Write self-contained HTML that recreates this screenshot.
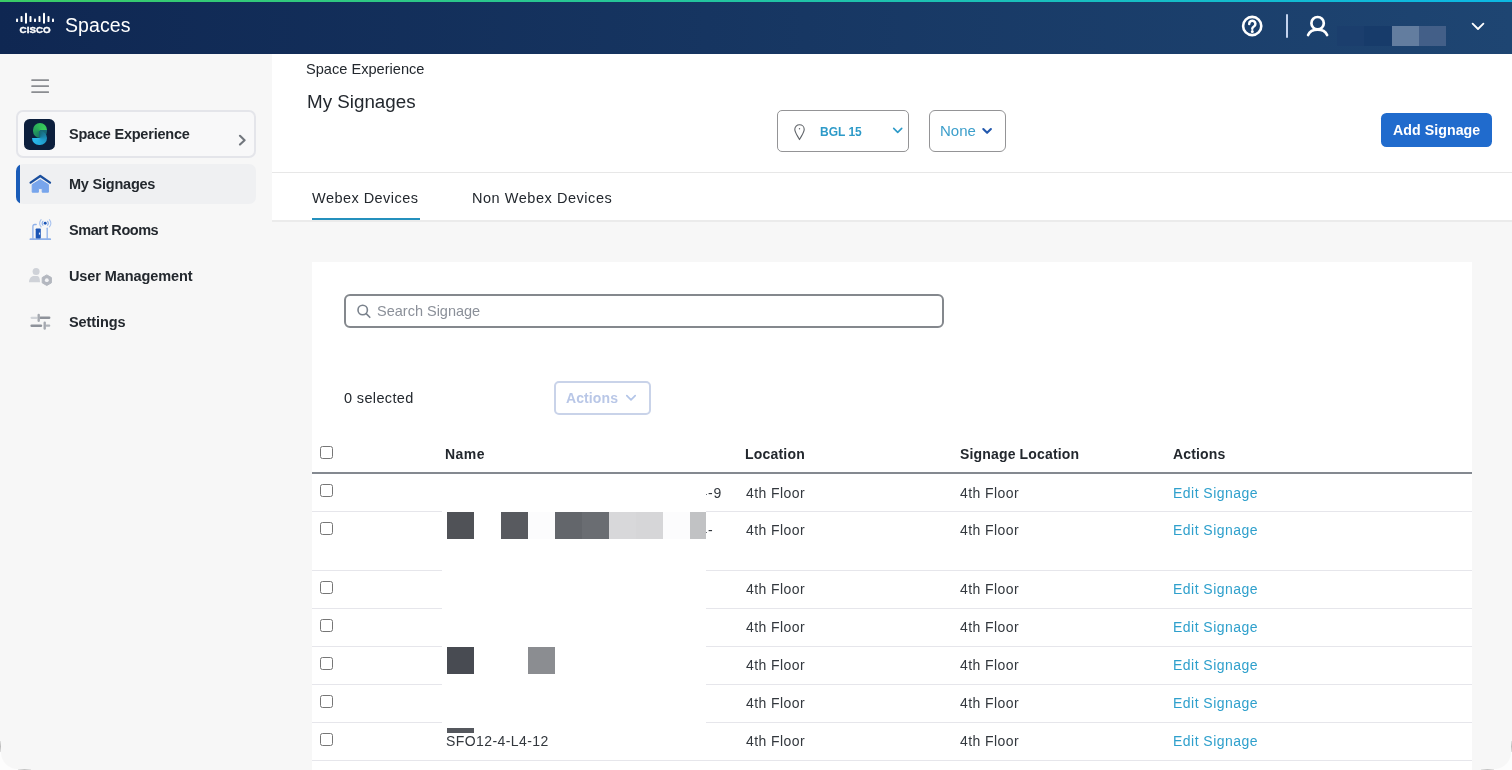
<!DOCTYPE html>
<html>
<head>
<meta charset="utf-8">
<title>Spaces</title>
<style>
*{box-sizing:border-box;margin:0;padding:0}
html,body{width:1512px;height:770px;overflow:hidden;background:#f7f7f7;font-family:"Liberation Sans",sans-serif;color:#23282e}
.abs{position:absolute}
#topbar{position:absolute;left:0;top:0;width:1512px;height:2px;background:linear-gradient(90deg,#3acc66 0%,#22c4a0 48%,#0db8e2 97%,#0db8e2 100%)}
#header{position:absolute;left:0;top:2px;width:1512px;height:52px;background:linear-gradient(90deg,#0f2752 0%,#1e4572 100%)}
#brand{will-change:transform;position:absolute;left:65px;top:13px;font-size:19.5px;color:#fff;line-height:24px;letter-spacing:0.1px}
#sidebar{position:absolute;left:0;top:54px;width:272px;height:716px;background:#f7f7f7}
#main{position:absolute;left:272px;top:54px;width:1240px;height:716px;background:#f7f7f7}
#pagehead{position:absolute;left:0;top:0;width:1240px;height:119px;background:#fff;border-bottom:1px solid #e7e7e7}
#tabs{position:absolute;left:0;top:119px;width:1240px;height:49px;background:#fff;border-bottom:2px solid #ebebeb}
#card{position:absolute;left:40px;top:208px;width:1160px;height:520px;background:#fff}
.nav{position:absolute;left:68.5px;font-size:14.5px;font-weight:bold;color:#23282e;line-height:20px;letter-spacing:-0.22px;white-space:nowrap;will-change:transform}
.txt{position:absolute;white-space:nowrap;will-change:transform}
</style>
</head>
<body>
<div id="header"></div>
<div id="topbar"></div>
<div id="brand">Spaces</div>
<!-- cisco logo -->
<svg class="abs" style="left:15px;top:11px;will-change:transform" width="41" height="24" viewBox="0 0 41 24">
  <g fill="#fff">
    <rect x="1.05" y="7.6" width="2" height="3.5" rx="0.9"/>
    <rect x="5.55" y="4.9" width="2" height="6.2" rx="0.9"/>
    <rect x="10" y="1.8" width="2" height="10.9" rx="0.9"/>
    <rect x="14.5" y="4.9" width="2" height="6.2" rx="0.9"/>
    <rect x="19" y="7.6" width="2" height="3.5" rx="0.9"/>
    <rect x="23.5" y="4.9" width="2" height="6.2" rx="0.9"/>
    <rect x="28" y="1.8" width="2" height="10.9" rx="0.9"/>
    <rect x="32.5" y="4.9" width="2" height="6.2" rx="0.9"/>
    <rect x="37" y="7.6" width="2" height="3.5" rx="0.9"/>
  </g>
  <text x="4.6" y="22.3" font-family="Liberation Sans" font-weight="bold" font-size="9.7" fill="#fff" stroke="#fff" stroke-width="0.4" textLength="31" lengthAdjust="spacingAndGlyphs">CISCO</text>
</svg>
<!-- help -->
<svg class="abs" style="left:1240px;top:14px" width="24" height="24" viewBox="0 0 24 24" fill="none" stroke="#fff" stroke-width="2.6" stroke-linecap="round" stroke-linejoin="round">
  <circle cx="12.2" cy="12" r="9.1"/>
  <path d="M9.2 9.900a3.100 3.100 0 1 1 4.700 2.600c-1.100.7-1.600 1.200-1.600 2.200" stroke-width="2.500"/>
  <circle cx="12.300" cy="17.600" r="0.900" fill="#fff" stroke-width="1.200"/>
</svg>
<div class="abs" style="left:1286px;top:14px;width:2px;height:24px;background:#c3d3ee;border-radius:1px"></div>
<!-- user -->
<svg class="abs" style="left:1305px;top:14px" width="25" height="24" viewBox="0 0 25 24" fill="none" stroke="#fff" stroke-width="2.700" stroke-linecap="round" stroke-linejoin="round">
  <circle cx="12.600" cy="9.200" r="6.200"/>
  <path d="M3.100 21c1.500-3.400 5-5.300 9.500-5.300s8 1.900 9.500 5.300"/>
</svg>
<!-- redaction blocks -->
<div class="abs" style="left:1337px;top:26px;width:27px;height:20px;background:#1b3e6d"></div>
<div class="abs" style="left:1364px;top:26px;width:28px;height:20px;background:#173b6a"></div>
<div class="abs" style="left:1392px;top:26px;width:27px;height:20px;background:#637d9f"></div>
<div class="abs" style="left:1419px;top:26px;width:27px;height:20px;background:#435f88"></div>
<svg class="abs" style="left:1470px;top:20px" width="16" height="12" viewBox="0 0 16 12" fill="none" stroke="#fff" stroke-width="1.8" stroke-linecap="round" stroke-linejoin="round"><path d="M2.6 3.6l5.4 5.4 5.4-5.4"/></svg>


<div id="sidebar">
  <!-- hamburger (coords relative to sidebar: y-54) -->
  <svg class="abs" style="left:30px;top:22px" width="22" height="20" viewBox="0 0 22 20"><g fill="#8b8d91"><rect x="1.3" y="3.2" width="17.7" height="1.7" rx="0.5"/><rect x="1.3" y="9.2" width="17.7" height="1.7" rx="0.5"/><rect x="1.3" y="15.2" width="17.7" height="1.8" rx="0.5"/></g></svg>

  <!-- space experience box -->
  <div class="abs" style="left:16px;top:56px;width:240px;height:48px;border:2px solid #e4e5ea;border-radius:7px;background:#f8f8f9"></div>
  <div class="abs" style="left:24.3px;top:65.3px;width:30.6px;height:30.6px;border-radius:5.6px;background:#0c1f3d"></div>
  <div class="abs" style="left:32.5px;top:69.3px;width:14.4px;height:14.4px;border-radius:50%;background:conic-gradient(from 90deg,#176a78 0deg,#18706e 80deg,#1c7f62 110deg,#25a05b 180deg,#31bd58 270deg,#3bcc5d 360deg)"></div>
  <div class="abs" style="left:32.2px;top:76.7px;width:14.4px;height:14.4px;border-radius:50%;background:conic-gradient(from 270deg,rgba(0,0,0,0) 0deg,rgba(0,0,0,0) 90deg,#176a78 90deg,#1a7f9f 150deg,#1e98c6 200deg,#24acde 270deg,#2abbee 360deg)"></div>
  <div class="nav" style="top:70px">Space Experience</div>
  <svg class="abs" style="left:237px;top:80px" width="10" height="12" viewBox="0 0 10 12" fill="none" stroke="#72777e" stroke-width="2.1" stroke-linecap="round" stroke-linejoin="round"><path d="M3 1.8l4.6 4.400L3 10.600"/></svg>

  <!-- active item -->
  <div class="abs" style="left:16px;top:110px;width:240px;height:40px;border-radius:7px;background:#eff0f2;overflow:hidden"><div style="width:4px;height:40px;background:#1a5cb8"></div></div>
  <svg class="abs" style="left:28px;top:119px" width="25" height="22" viewBox="0 0 25 22">
    <path d="M4.2 11.6L12.3 6.6 20.4 11.6V19.2H14.2V15.6H10.4V19.2H4.2Z" fill="#78a5ec" stroke="#78a5ec" stroke-width="1" stroke-linejoin="round"/>
    <path d="M2.6 9.6L12.3 3 22 9.6" fill="none" stroke="#1b4f9e" stroke-width="2.3" stroke-linecap="round" stroke-linejoin="round"/>
  </svg>
  <div class="nav" style="top:120px">My Signages</div>

  <!-- smart rooms -->
  <svg class="abs" style="left:28px;top:163px" width="25" height="24" viewBox="0 0 25 24">
    <g fill="none" stroke="#8fb1ea" stroke-width="1.3" stroke-linecap="round">
      <path d="M2.4 22.2h19.8" stroke-width="1.8"/>
      <path d="M4.9 21.6V9.4c0-1.2.7-1.9 1.9-1.9h1.4"/>
      <path d="M19.2 21.6V11.2"/>
      <path d="M14.9 4.3c-.9 1.1-.9 2.8 0 3.9M19.6 4.3c.9 1.1.9 2.8 0 3.9" stroke-width="1.1"/>
      <path d="M13.1 2.6c-1.7 2.1-1.7 5.2 0 7.3M21.4 2.6c1.7 2.1 1.7 5.2 0 7.3" stroke-width="1.1" stroke="#a9c3ef"/>
    </g>
    <rect x="7.7" y="11.6" width="5.1" height="9.8" rx="0.7" fill="#1b55b5"/>
    <rect x="10.9" y="15.6" width="1.2" height="2" fill="#dfe8f8"/>
    <circle cx="17.2" cy="6.3" r="1.45" fill="#1b55b5"/>
  </svg>
  <div class="nav" style="top:166px;letter-spacing:-0.46px">Smart Rooms</div>

  <!-- user management -->
  <svg class="abs" style="left:28px;top:212px" width="26" height="22" viewBox="0 0 26 22">
    <circle cx="8.1" cy="5.4" r="3.5" fill="#cfd2d8"/>
    <path d="M1 16.3c0-3.5 2.2-6.2 5-6.2h3.4c1.6 0 2.6 2.4 2.6 6.2z" fill="#cfd2d8"/>
    <path d="M18.8 8.9l4.6 2.65v5.3l-4.6 2.65-4.6-2.65v-5.3z" fill="#b3b7bf" stroke="#b3b7bf" stroke-width="1" stroke-linejoin="round"/>
    <circle cx="18.8" cy="14.2" r="1.9" fill="#f4f4f6"/>
  </svg>
  <div class="nav" style="top:212px;letter-spacing:-0.1px">User Management</div>

  <!-- settings -->
  <svg class="abs" style="left:28px;top:257px" width="25" height="22" viewBox="0 0 25 22">
    <g stroke-linecap="round" fill="none">
      <path d="M3.6 6.8h5" stroke="#d0d3d8" stroke-width="2.2"/>
      <path d="M12.4 6.8h8.8" stroke="#8e929a" stroke-width="2.4"/>
      <path d="M10.7 3.9v5.8" stroke="#a5a9b0" stroke-width="2.4"/>
      <path d="M3.6 14.7h9.4" stroke="#8e929a" stroke-width="2.4"/>
      <path d="M18.6 14.7h2.6" stroke="#b0b4ba" stroke-width="2.2"/>
      <path d="M16.7 11.8v5.8" stroke="#a5a9b0" stroke-width="2.4"/>
    </g>
  </svg>
  <div class="nav" style="top:258px;letter-spacing:-0.08px">Settings</div>
</div>

<div id="main">
  <div id="pagehead"></div>
  <div id="tabs"></div>
  <div id="card"></div>
<div class="txt" style="left:34.3px;top:5.4px;font-size:14.6px;line-height:20px;color:#23282e;font-weight:normal;letter-spacing:0px;">Space Experience</div>
<div class="txt" style="left:34.6px;top:37.5px;font-size:18.8px;line-height:20px;color:#23282e;font-weight:normal;letter-spacing:0px;">My Signages</div>
<div class="abs" style="left:505.0px;top:56.0px;width:132.0px;height:42.0px;border:1px solid #949496;border-radius:5px;background:#fff"></div>
<svg class="abs" style="left:521px;top:68.5px" width="13" height="18" viewBox="0 0 13 18" fill="none" stroke="#5f6368" stroke-width="1.1" stroke-linejoin="round"><path d="M6.500 1.700c2.700 0 4.700 2 4.700 4.600 0 3.400-3 6.800-4.700 10.300C4.800 13.100 1.800 9.700 1.800 6.300c0-2.600 2-4.600 4.700-4.600z"/><circle cx="6.5" cy="5.7" r="0.7" fill="#5f6368" stroke="none"/></svg>
<div class="txt" style="left:548.0px;top:67.7px;font-size:12px;line-height:20px;color:#2d9ac8;font-weight:bold;letter-spacing:0px;">BGL 15</div>
<svg class="abs" style="left:618.5px;top:70.5px" width="14" height="12" viewBox="0 0 14 12" fill="none" stroke="#2d9ac8" stroke-width="1.6" stroke-linecap="round" stroke-linejoin="round"><path d="M2.700 3.400l4 4 4-4"/></svg>
<div class="abs" style="left:657.0px;top:56.0px;width:77.0px;height:42.0px;border:1px solid #949496;border-radius:6px;background:#fff"></div>
<div class="txt" style="left:668.0px;top:66.7px;font-size:15px;line-height:20px;color:#3d9fcb;font-weight:normal;letter-spacing:0px;">None</div>
<svg class="abs" style="left:708.4px;top:71px" width="14" height="12" viewBox="0 0 14 12" fill="none" stroke="#2358ad" stroke-width="2.1" stroke-linecap="round" stroke-linejoin="round"><path d="M3.300 4l3.800 3.800 3.800-3.800"/></svg>
<div class="abs" style="left:1109.0px;top:59.0px;width:111.0px;height:34.0px;border-radius:5.5px;background:#206bcd"></div>
<div class="txt" style="left:1120.6px;top:65.8px;font-size:14.2px;line-height:20px;color:#fff;font-weight:bold;letter-spacing:0.05px;">Add Signage</div>
<div class="txt" style="left:40.3px;top:134.0px;font-size:14.5px;line-height:20px;color:#23282e;font-weight:normal;letter-spacing:0.46px;">Webex Devices</div>
<div class="txt" style="left:200.2px;top:134.0px;font-size:14.5px;line-height:20px;color:#23282e;font-weight:normal;letter-spacing:0.54px;">Non Webex Devices</div>
<div class="abs" style="left:40.0px;top:164.0px;width:107.6px;height:2.0px;background:#2490bd"></div>
<div class="abs" style="left:72.0px;top:240.0px;width:600.0px;height:33.5px;border:2px solid #84888d;border-radius:6px;background:#fff"></div>
<svg class="abs" style="left:83px;top:249px" width="18" height="17" viewBox="0 0 18 17" fill="none" stroke="#7a828c" stroke-width="1.6" stroke-linecap="round"><circle cx="7.7" cy="7" r="4.700"/><path d="M11.200 10.600l3.600 3.700"/></svg>
<div class="txt" style="left:105.2px;top:246.9px;font-size:14.5px;line-height:20px;color:#8b9099;font-weight:normal;letter-spacing:0px;">Search Signage</div>
<div class="txt" style="left:72.2px;top:333.7px;font-size:14.5px;line-height:20px;color:#23282e;font-weight:normal;letter-spacing:0.36px;">0 selected</div>
<div class="abs" style="left:282.0px;top:327.0px;width:97.0px;height:34.0px;border:2px solid #c9d3e9;border-radius:5px;background:#fff"></div>
<div class="txt" style="left:294.3px;top:333.8px;font-size:14px;line-height:20px;color:#b9c7e7;font-weight:bold;letter-spacing:0.1px;">Actions</div>
<svg class="abs" style="left:352.4px;top:337.7px" width="14" height="12" viewBox="0 0 14 12" fill="none" stroke="#b3c5e8" stroke-width="1.7" stroke-linecap="round" stroke-linejoin="round"><path d="M2.800 3.600l4.200 4.200 4.200-4.200"/></svg>
<div class="abs" style="left:48.0px;top:392.3px;width:13.0px;height:13.0px;border:1px solid #767676;border-radius:2.5px;background:#fff"></div>
<div class="txt" style="left:173.0px;top:390.3px;font-size:14px;line-height:20px;color:#23282e;font-weight:bold;letter-spacing:0.45px;">Name</div>
<div class="txt" style="left:473.4px;top:390.3px;font-size:14px;line-height:20px;color:#23282e;font-weight:bold;letter-spacing:0.2px;">Location</div>
<div class="txt" style="left:687.8px;top:390.3px;font-size:14px;line-height:20px;color:#23282e;font-weight:bold;letter-spacing:0.16px;">Signage Location</div>
<div class="txt" style="left:901.4px;top:390.3px;font-size:14px;line-height:20px;color:#23282e;font-weight:bold;letter-spacing:0.15px;">Actions</div>
<div class="abs" style="left:40.0px;top:418.0px;width:1160.0px;height:2.0px;background:#848990"></div>
<div class="abs" style="left:48.0px;top:430.3px;width:13.0px;height:13.0px;border:1px solid #767676;border-radius:2.5px;background:#fff"></div>
<div class="txt" style="left:473.5px;top:428.5px;font-size:14px;line-height:20px;color:#33383e;font-weight:normal;letter-spacing:0.42px;">4th Floor</div>
<div class="txt" style="left:687.5px;top:428.5px;font-size:14px;line-height:20px;color:#33383e;font-weight:normal;letter-spacing:0.42px;">4th Floor</div>
<div class="txt" style="left:900.8px;top:428.5px;font-size:14px;line-height:20px;color:#2fa0cc;font-weight:normal;letter-spacing:0.47px;">Edit Signage</div>
<div class="abs" style="left:40.0px;top:457.0px;width:1160.0px;height:1.0px;background:#e6e6eb"></div>
<div class="abs" style="left:48.0px;top:468.3px;width:13.0px;height:13.0px;border:1px solid #767676;border-radius:2.5px;background:#fff"></div>
<div class="txt" style="left:473.5px;top:466.3px;font-size:14px;line-height:20px;color:#33383e;font-weight:normal;letter-spacing:0.42px;">4th Floor</div>
<div class="txt" style="left:687.5px;top:466.3px;font-size:14px;line-height:20px;color:#33383e;font-weight:normal;letter-spacing:0.42px;">4th Floor</div>
<div class="txt" style="left:900.8px;top:466.3px;font-size:14px;line-height:20px;color:#2fa0cc;font-weight:normal;letter-spacing:0.47px;">Edit Signage</div>
<div class="abs" style="left:40.0px;top:516.0px;width:1160.0px;height:1.0px;background:#e6e6eb"></div>
<div class="abs" style="left:48.0px;top:527.3px;width:13.0px;height:13.0px;border:1px solid #767676;border-radius:2.5px;background:#fff"></div>
<div class="txt" style="left:473.5px;top:525.3px;font-size:14px;line-height:20px;color:#33383e;font-weight:normal;letter-spacing:0.42px;">4th Floor</div>
<div class="txt" style="left:687.5px;top:525.3px;font-size:14px;line-height:20px;color:#33383e;font-weight:normal;letter-spacing:0.42px;">4th Floor</div>
<div class="txt" style="left:900.8px;top:525.3px;font-size:14px;line-height:20px;color:#2fa0cc;font-weight:normal;letter-spacing:0.47px;">Edit Signage</div>
<div class="abs" style="left:40.0px;top:554.0px;width:1160.0px;height:1.0px;background:#e6e6eb"></div>
<div class="abs" style="left:48.0px;top:565.3px;width:13.0px;height:13.0px;border:1px solid #767676;border-radius:2.5px;background:#fff"></div>
<div class="txt" style="left:473.5px;top:563.3px;font-size:14px;line-height:20px;color:#33383e;font-weight:normal;letter-spacing:0.42px;">4th Floor</div>
<div class="txt" style="left:687.5px;top:563.3px;font-size:14px;line-height:20px;color:#33383e;font-weight:normal;letter-spacing:0.42px;">4th Floor</div>
<div class="txt" style="left:900.8px;top:563.3px;font-size:14px;line-height:20px;color:#2fa0cc;font-weight:normal;letter-spacing:0.47px;">Edit Signage</div>
<div class="abs" style="left:40.0px;top:592.0px;width:1160.0px;height:1.0px;background:#e6e6eb"></div>
<div class="abs" style="left:48.0px;top:603.3px;width:13.0px;height:13.0px;border:1px solid #767676;border-radius:2.5px;background:#fff"></div>
<div class="txt" style="left:473.5px;top:601.3px;font-size:14px;line-height:20px;color:#33383e;font-weight:normal;letter-spacing:0.42px;">4th Floor</div>
<div class="txt" style="left:687.5px;top:601.3px;font-size:14px;line-height:20px;color:#33383e;font-weight:normal;letter-spacing:0.42px;">4th Floor</div>
<div class="txt" style="left:900.8px;top:601.3px;font-size:14px;line-height:20px;color:#2fa0cc;font-weight:normal;letter-spacing:0.47px;">Edit Signage</div>
<div class="abs" style="left:40.0px;top:630.0px;width:1160.0px;height:1.0px;background:#e6e6eb"></div>
<div class="abs" style="left:48.0px;top:641.3px;width:13.0px;height:13.0px;border:1px solid #767676;border-radius:2.5px;background:#fff"></div>
<div class="txt" style="left:473.5px;top:639.3px;font-size:14px;line-height:20px;color:#33383e;font-weight:normal;letter-spacing:0.42px;">4th Floor</div>
<div class="txt" style="left:687.5px;top:639.3px;font-size:14px;line-height:20px;color:#33383e;font-weight:normal;letter-spacing:0.42px;">4th Floor</div>
<div class="txt" style="left:900.8px;top:639.3px;font-size:14px;line-height:20px;color:#2fa0cc;font-weight:normal;letter-spacing:0.47px;">Edit Signage</div>
<div class="abs" style="left:40.0px;top:668.0px;width:1160.0px;height:1.0px;background:#e6e6eb"></div>
<div class="abs" style="left:48.0px;top:679.3px;width:13.0px;height:13.0px;border:1px solid #767676;border-radius:2.5px;background:#fff"></div>
<div class="txt" style="left:473.5px;top:677.3px;font-size:14px;line-height:20px;color:#33383e;font-weight:normal;letter-spacing:0.42px;">4th Floor</div>
<div class="txt" style="left:687.5px;top:677.3px;font-size:14px;line-height:20px;color:#33383e;font-weight:normal;letter-spacing:0.42px;">4th Floor</div>
<div class="txt" style="left:900.8px;top:677.3px;font-size:14px;line-height:20px;color:#2fa0cc;font-weight:normal;letter-spacing:0.47px;">Edit Signage</div>
<div class="abs" style="left:40.0px;top:706.0px;width:1160.0px;height:1.0px;background:#e6e6eb"></div>
<div class="txt" style="left:436.3px;top:428.5px;font-size:14px;line-height:20px;color:#33383e;font-weight:normal;letter-spacing:0.9px;">-9</div>
<div class="abs" style="left:434.0px;top:439.7px;width:1.3px;height:1.8px;background:#6e7278"></div>
<div class="txt" style="left:436.3px;top:466.3px;font-size:14px;line-height:20px;color:#33383e;font-weight:normal;letter-spacing:0.9px;">-</div>
<div class="abs" style="left:434.0px;top:477.5px;width:1.3px;height:1.8px;background:#6e7278"></div>
<div class="txt" style="left:173.6px;top:677.3px;font-size:14px;line-height:20px;color:#33383e;font-weight:normal;letter-spacing:0.42px;">SFO12-4-L4-12</div>
<div class="abs" style="left:170.0px;top:420.5px;width:264.0px;height:254.0px;background:#fff"></div>
<div class="abs" style="left:175.0px;top:458.0px;width:27.0px;height:27.0px;background:#505257"></div>
<div class="abs" style="left:229.0px;top:458.0px;width:27.0px;height:27.0px;background:#585a5f"></div>
<div class="abs" style="left:256.0px;top:458.0px;width:27.0px;height:27.0px;background:#fcfcfd"></div>
<div class="abs" style="left:283.0px;top:458.0px;width:27.0px;height:27.0px;background:#63666b"></div>
<div class="abs" style="left:310.0px;top:458.0px;width:27.0px;height:27.0px;background:#6a6d72"></div>
<div class="abs" style="left:337.0px;top:458.0px;width:27.0px;height:27.0px;background:#d8d8da"></div>
<div class="abs" style="left:364.0px;top:458.0px;width:27.0px;height:27.0px;background:#d6d6d8"></div>
<div class="abs" style="left:391.0px;top:458.0px;width:27.0px;height:27.0px;background:#fcfcfd"></div>
<div class="abs" style="left:418.0px;top:458.0px;width:16.0px;height:27.0px;background:#c1c2c4"></div>
<div class="abs" style="left:175.0px;top:593.0px;width:27.0px;height:27.0px;background:#484b52"></div>
<div class="abs" style="left:256.0px;top:593.0px;width:27.0px;height:27.0px;background:#8b8d91"></div>
<div class="abs" style="left:175.0px;top:674.0px;width:27.0px;height:5.0px;background:#55585e"></div>
</div>
<!-- window bottom corners -->
<div class="abs" style="left:0;top:752px;width:18px;height:18px;background:radial-gradient(circle at 100% 0%,rgba(255,255,255,0) 16.6px,#fdfdfd 17.6px)"></div>
<div class="abs" style="left:1494px;top:752px;width:18px;height:18px;background:radial-gradient(circle at 0% 0%,rgba(255,255,255,0) 16.6px,#fdfdfd 17.6px)"></div>
<div class="abs" style="left:0;top:741px;width:1px;height:11px;background:linear-gradient(180deg,#e2e2e2,#bdbdbd,#e2e2e2)"></div>
<div class="abs" style="left:1511px;top:741px;width:1px;height:11px;background:linear-gradient(180deg,#e2e2e2,#bdbdbd,#e2e2e2)"></div>
<div class="abs" style="left:18px;top:769px;width:13px;height:1px;background:linear-gradient(90deg,#e6e6e6,#c4c4c4,#e6e6e6)"></div>
<div class="abs" style="left:1481px;top:769px;width:13px;height:1px;background:linear-gradient(90deg,#e6e6e6,#c4c4c4,#e6e6e6)"></div>
</body>
</html>
